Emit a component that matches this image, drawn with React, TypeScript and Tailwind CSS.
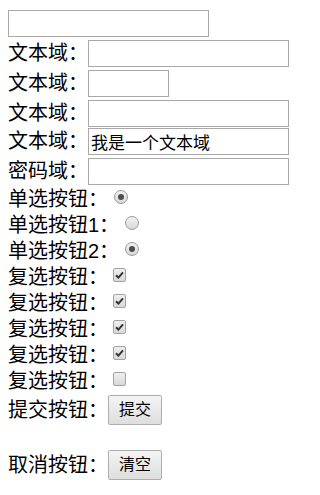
import React from "react";

const FONT = { fontFamily: '"Liberation Sans", "Noto Sans CJK SC", sans-serif' };

function TextBox({ w = "w-[201px]", value = "", type = "text" }: { w?: string; value?: string; type?: string }) {
  return (
    <input
      type={type}
      defaultValue={value}
      className={`${w} block h-[27px] border border-[#a9a9a9] bg-white px-[2px] text-[17px] leading-none text-black outline-none`}
    />
  );
}

function Radio({ checked }: { checked?: boolean }) {
  return (
    <span className="mb-[4px] flex h-[14px] w-[14px] items-center justify-center rounded-full border border-[#9a9a9a] bg-linear-to-b from-[#f2f2f2] to-[#d8d8d8]">
      {checked && <span className="h-[6px] w-[6px] rounded-full bg-[#4d4d4d]" />}
    </span>
  );
}

function Checkbox({ checked }: { checked?: boolean }) {
  return (
    <span className="mb-[4px] flex h-[14px] w-[13px] items-center justify-center rounded-[2px] border border-[#a3a3a3] bg-linear-to-b from-[#eeeeee] to-[#d9d9d9]">
      {checked && (
        <svg width="9" height="8" viewBox="0 0 9 8">
          <path d="M1 4.2 L3.4 6.6 L8 1.4" fill="none" stroke="#333" strokeWidth="2" />
        </svg>
      )}
    </span>
  );
}

function Btn({ children }: { children: React.ReactNode }) {
  return (
    <button
      type="button"
      className="h-[30px] w-[54px] rounded-[2px] border border-[#adadad] bg-linear-to-b from-[#f4f4f4] to-[#dedede] text-[16px] leading-none text-black"
    >
      {children}
    </button>
  );
}

export default function App() {
  return (
    <div className="bg-white pl-[8px] pt-[10px] text-[20px] text-black" style={FONT}>
      <TextBox />

      <div className="mt-[3px]">
        <div className="flex h-[30px] items-start">
          <span className="leading-[27px]">文本域：</span>
          <TextBox />
        </div>
        <div className="flex h-[30px] items-start">
          <span className="leading-[27px]">文本域：</span>
          <TextBox w="w-[81px]" />
        </div>
        <div className="flex h-[28px] items-start">
          <span className="leading-[27px]">文本域：</span>
          <TextBox />
        </div>
        <div className="flex h-[30px] items-start">
          <span className="leading-[27px]">文本域：</span>
          <TextBox value="我是一个文本域" />
        </div>
        <div className="flex h-[28px] items-start">
          <span className="leading-[27px]">密码域：</span>
          <TextBox type="password" />
        </div>
      </div>

      <div>
        <div className="flex h-[26px] items-center">
          <span className="leading-[26px]">单选按钮：</span>
          <span className="ml-[6px] flex"><Radio checked /></span>
        </div>
        <div className="flex h-[26px] items-center">
          <span className="leading-[26px]">单选按钮1：</span>
          <span className="ml-[6px] flex"><Radio /></span>
        </div>
        <div className="flex h-[26px] items-center">
          <span className="leading-[26px]">单选按钮2：</span>
          <span className="ml-[6px] flex"><Radio checked /></span>
        </div>
        {[true, true, true, true, false].map((c, i) => (
          <div key={i} className="flex h-[26px] items-center">
            <span className="leading-[26px]">复选按钮：</span>
            <span className="ml-[5px] flex"><Checkbox checked={c} /></span>
          </div>
        ))}
      </div>

      <div className="flex h-[32px] items-center">
        <span className="leading-[26px]">提交按钮：</span>
        <Btn>提交</Btn>
      </div>
      <div className="h-[23px]" />
      <div className="flex h-[32px] items-center">
        <span className="leading-[26px]">取消按钮：</span>
        <Btn>清空</Btn>
      </div>
    </div>
  );
}
